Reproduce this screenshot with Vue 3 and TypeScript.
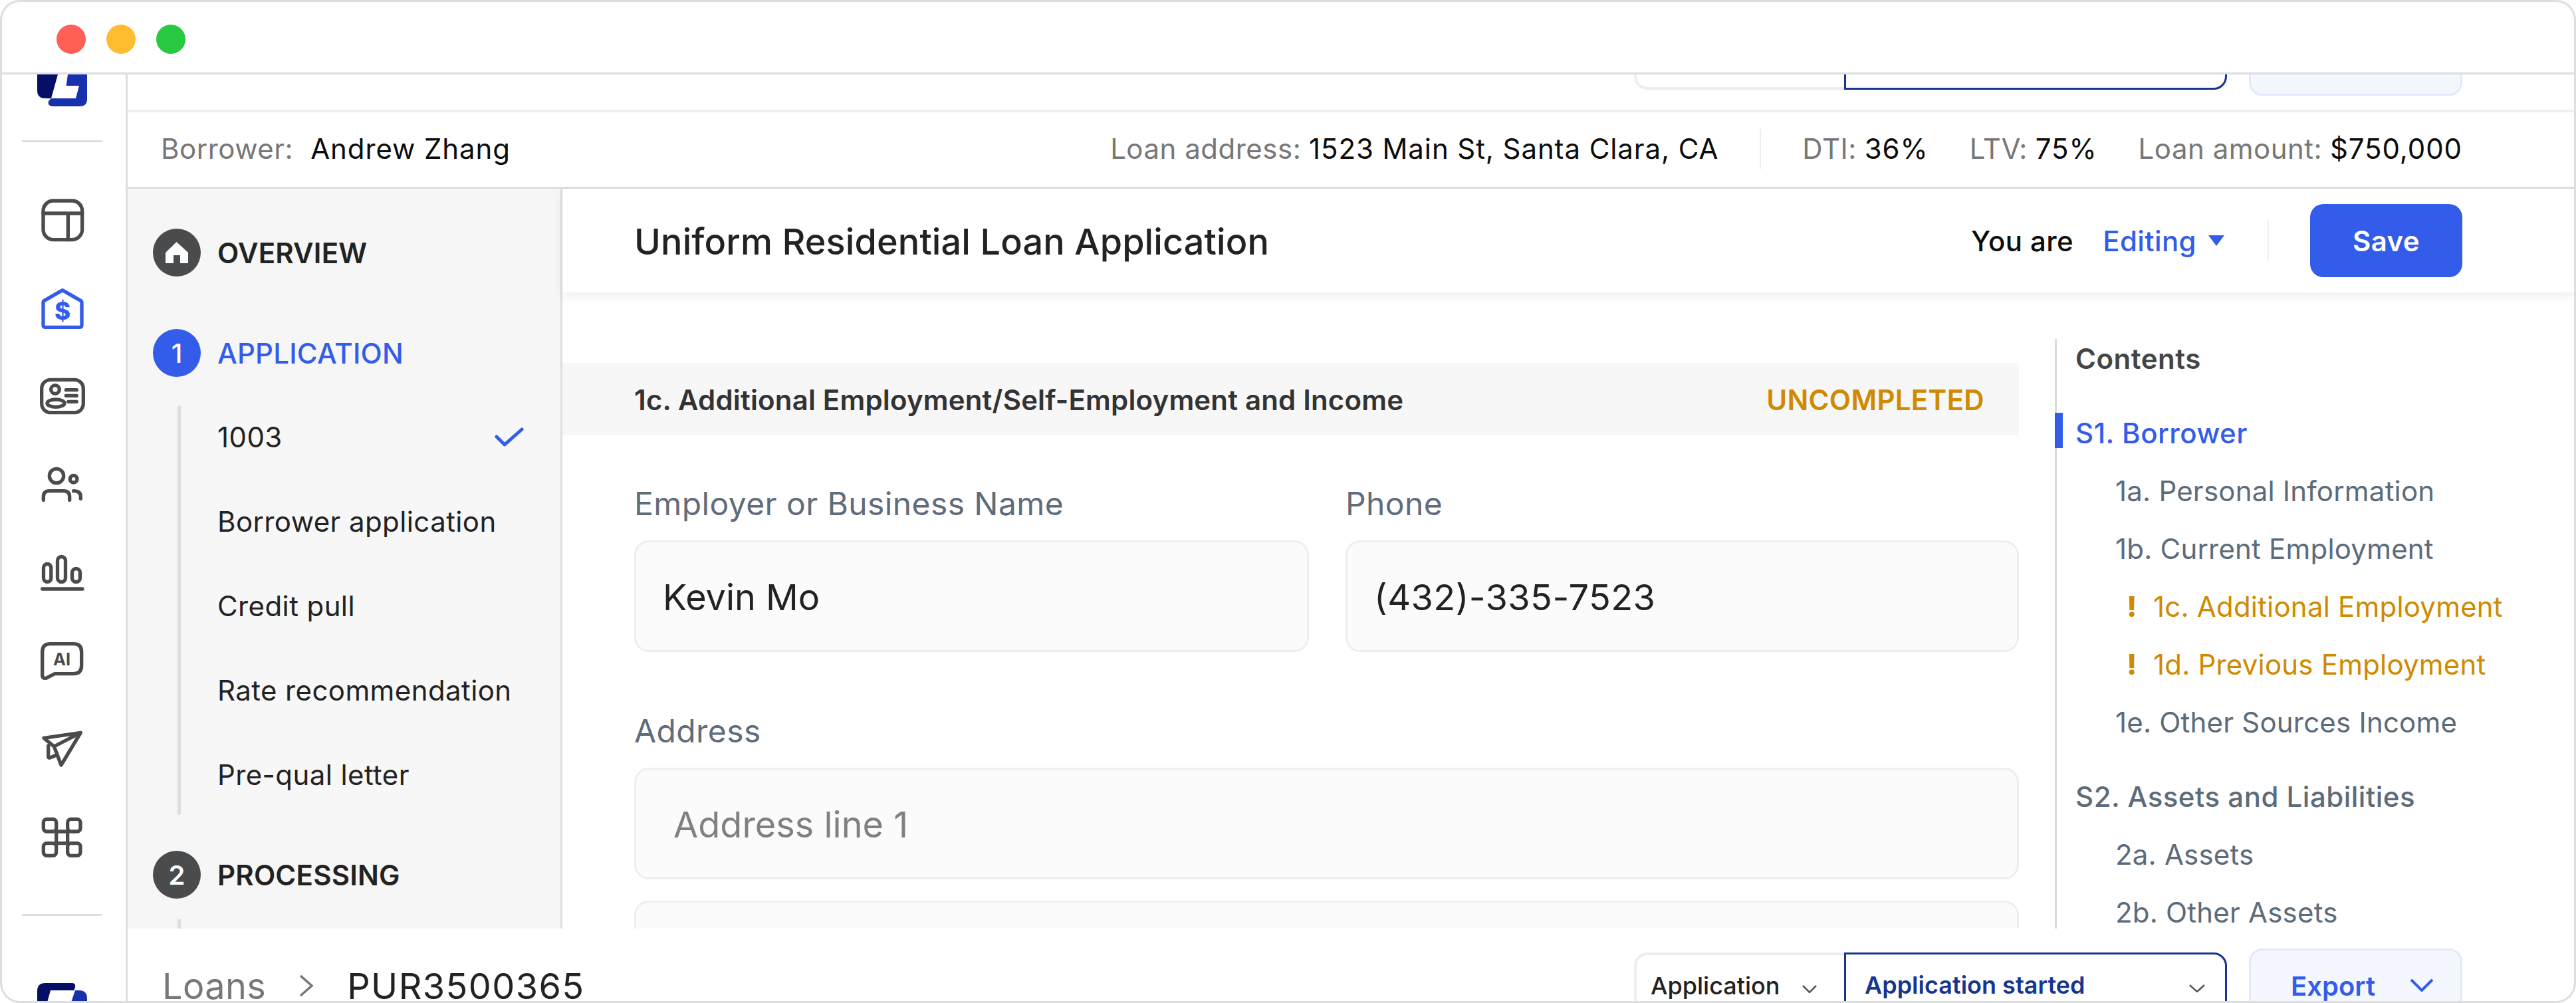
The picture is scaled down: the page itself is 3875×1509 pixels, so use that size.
<template>
  <div class="window">
    <div class="titlebar">
      <span class="dot red"></span>
      <span class="dot yellow"></span>
      <span class="dot green"></span>
    </div>

    <div class="body">
      <aside class="rail">
        <svg class="logo-top" viewBox="0 0 75 49" width="75" height="49">
          <path d="M0 0H31L21 36H12Q0 36 0 24Z" fill="#060f66" />
          <path d="M46 0H75V37Q75 48 64 48H24Q15 48 17 40L21 36H58L63 17H43.6Z" fill="#1731ae" />
        </svg>
        <div class="rail-sep first"></div>
        <div class="rail-icons">
          <svg viewBox="0 0 24 24" class="rail-icon">
            <rect x="3.3" y="3.3" width="17.6" height="17.6" rx="4.6" />
            <path d="M3.3 9H20.9M14.5 9V20.9" />
          </svg>
          <svg viewBox="0 0 24 24" class="rail-icon active">
            <path d="M12 3.8 20.4 8.6Q20.7 8.8 20.7 9.2V19.6Q20.7 20.5 19.8 20.5H4.2Q3.3 20.5 3.3 19.6V9.2Q3.3 8.8 3.6 8.6Z" />
            <text x="12" y="17" text-anchor="middle" class="icon-text">$</text>
          </svg>
          <svg viewBox="0 0 24 24" class="rail-icon">
            <rect x="2.6" y="4.6" width="18.8" height="14.8" rx="4" />
            <circle cx="8.7" cy="9" r="1.9" />
            <ellipse cx="9" cy="15.2" rx="3.9" ry="1.7" />
            <path d="M13.6 9.2H18.4M13.6 11.8H18.4M14.6 14.5H18.4" />
          </svg>
          <svg viewBox="0 0 24 24" class="rail-icon">
            <circle cx="9.3" cy="8.1" r="3.2" />
            <circle cx="17" cy="9.5" r="1.6" />
            <path d="M3.4 19V17.6Q3.4 14.9 6 14.9H12.6Q15.2 14.9 15.2 17.6V19M17 14.9Q20.2 14.9 20.2 17.4V18.4" />
          </svg>
          <svg viewBox="0 0 24 24" class="rail-icon">
            <rect x="3.45" y="7.95" width="3.4" height="8.1" rx="1.7" />
            <rect x="9.75" y="4.65" width="3.6" height="11.4" rx="1.8" />
            <rect x="16.35" y="10.05" width="3.6" height="6" rx="1.8" />
            <path d="M2.9 19.2H21" />
          </svg>
          <svg viewBox="0 0 24 24" class="rail-icon">
            <path d="M6.5 4.4H17Q20.6 4.4 20.6 8V14.2Q20.6 17.9 17 17.9H8.5L5 19.7Q2.9 20.5 2.9 18.5V8Q2.9 4.4 6.5 4.4Z" />
            <text x="11.7" y="14" text-anchor="middle" class="icon-text small">AI</text>
          </svg>
          <svg viewBox="0 0 24 24" class="rail-icon">
            <path d="M20.2 4.6 3.6 7 8.2 10.8 20.2 4.6 11.4 19.2 8.2 10.8M5.6 10.5V15.4Q5.6 16.1 6.4 15.9L9.3 14.7" />
          </svg>
          <svg viewBox="0 0 24 24" class="rail-icon">
            <rect x="3.4" y="3.7" width="5.8" height="5.6" rx="1.5" />
            <rect x="14.3" y="3.7" width="5.8" height="5.6" rx="1.5" />
            <rect x="3.4" y="14.6" width="5.8" height="5.6" rx="1.5" />
            <rect x="14.3" y="14.6" width="5.8" height="5.6" rx="1.5" />
            <path d="M9.2 9.3H14.3M9.2 14.6H14.3M9.2 9.3V14.6M14.3 9.3V14.6" />
          </svg>
        </div>
        <div class="rail-sep last"></div>
        <svg class="logo-bottom" viewBox="0 0 75 29" width="75" height="29">
          <path d="M12 0H52Q58 0 57 6L55.5 11H20L15 29H0V12Q0 0 12 0Z" fill="#060f66" />
          <path d="M57 11H63Q75 11 75 23V29H51Z" fill="#1731ae" />
        </svg>
      </aside>

      <div class="main">
        <div class="top-strip">
          <div class="selects">
            <div class="select plain"></div>
            <div class="select current"></div>
          </div>
          <div class="export"></div>
        </div>

        <div class="info-bar">
          <div class="borrower">
            <span class="muted">Borrower:</span>
            <span class="strong">Andrew Zhang</span>
          </div>
          <div class="facts">
            <span class="fact"><span class="muted">Loan address:</span> <span class="strong">1523 Main St, Santa Clara, CA</span></span>
            <span class="fact-sep"></span>
            <span class="fact"><span class="muted">DTI:</span> <span class="strong">36%</span></span>
            <span class="fact"><span class="muted">LTV:</span> <span class="strong">75%</span></span>
            <span class="fact"><span class="muted">Loan amount:</span> <span class="strong">$750,000</span></span>
          </div>
        </div>

        <div class="content">
          <nav class="steps">
            <div class="step first">
              <span class="step-badge">
                <svg viewBox="0 0 36 32" width="36" height="32"><path d="M17.5 0 35 16V32H23V20H13V32H1V16Z" fill="#fff" /></svg>
              </span>
              <span class="step-name">OVERVIEW</span>
            </div>
            <div class="step active">
              <span class="step-badge">1</span>
              <span class="step-name">APPLICATION</span>
            </div>
            <div class="sub-list">
              <div v-for="item in stepItems" :key="item.name" class="sub-item">
                <span>{{ item.name }}</span>
                <svg v-if="item.done" viewBox="0 0 44 30" width="44" height="30" class="check">
                  <path d="M3 14 15 26 41 3" />
                </svg>
              </div>
            </div>
            <div class="step">
              <span class="step-badge">2</span>
              <span class="step-name">PROCESSING</span>
            </div>
            <div class="sub-stub"></div>
          </nav>

          <div class="page">
            <header class="page-head">
              <h1>Uniform Residential Loan Application</h1>
              <div class="page-actions">
                <span class="you-are">You are</span>
                <span class="mode">Editing</span>
                <svg viewBox="0 0 24 16" width="24" height="16" class="caret"><path d="M0 0H24L12 16Z" /></svg>
                <span class="action-sep"></span>
                <button class="save">Save</button>
              </div>
            </header>

            <div class="page-body">
              <section class="form">
                <div class="section-bar">
                  <span class="section-title">1c. Additional Employment/Self-Employment and Income</span>
                  <span class="section-status">UNCOMPLETED</span>
                </div>
                <div class="two-col">
                  <div>
                    <div class="label">Employer or Business Name</div>
                    <div class="input">Kevin Mo</div>
                  </div>
                  <div>
                    <div class="label">Phone</div>
                    <div class="input digits">(432)-335-7523</div>
                  </div>
                </div>
                <div class="address">
                  <div class="label">Address</div>
                  <div class="input placeholder">Address line 1</div>
                  <div class="input blank"></div>
                </div>
              </section>

              <aside class="contents">
                <div class="contents-title">Contents</div>
                <template v-for="group in contents" :key="group.title">
                  <div class="toc-group" :class="{ current: group.current }">{{ group.title }}</div>
                  <div v-for="row in group.rows" :key="row.text" class="toc-row" :class="{ warn: row.warn }">
                    <span v-if="row.warn" class="toc-mark">!</span>{{ row.text }}
                  </div>
                </template>
              </aside>
            </div>
          </div>
        </div>

        <footer class="footer">
          <div class="crumbs">
            <span class="crumb-root">Loans</span>
            <svg viewBox="0 0 22 34" width="22" height="34" class="crumb-arrow"><path d="M2 2 19 17 2 32" /></svg>
            <span class="crumb-id">PUR3500365</span>
          </div>
          <div class="footer-actions">
            <div class="selects">
              <div class="select plain">
                <span>Application</span>
                <svg viewBox="0 0 22 12" width="22" height="12" class="chev"><path d="M1 1 11 11 21 1" /></svg>
              </div>
              <div class="select current">
                <span>Application started</span>
                <svg viewBox="0 0 24 12" width="24" height="12" class="chev"><path d="M1 1 12 11 23 1" /></svg>
              </div>
            </div>
            <div class="export">
              <span>Export</span>
              <svg viewBox="0 0 36 20" width="36" height="20" class="chev blue"><path d="M2 2 18 18 34 2" /></svg>
            </div>
          </div>
        </footer>
      </div>
    </div>
  </div>
</template>

<script setup lang="ts">
interface StepItem {
  name: string
  done?: boolean
}

interface TocRow {
  text: string
  warn?: boolean
}

interface TocGroup {
  title: string
  current?: boolean
  rows: TocRow[]
}

const stepItems: StepItem[] = [
  { name: '1003', done: true },
  { name: 'Borrower application' },
  { name: 'Credit pull' },
  { name: 'Rate recommendation' },
  { name: 'Pre-qual letter' },
]

const contents: TocGroup[] = [
  {
    title: 'S1. Borrower',
    current: true,
    rows: [
      { text: '1a. Personal Information' },
      { text: '1b. Current Employment' },
      { text: '1c. Additional Employment', warn: true },
      { text: '1d. Previous Employment', warn: true },
      { text: '1e. Other Sources Income' },
    ],
  },
  {
    title: 'S2. Assets and Liabilities',
    rows: [{ text: '2a. Assets' }, { text: '2b. Other Assets' }],
  },
]
</script>

<style>
html,
body {
  margin: 0;
  background: #fff;
}
</style>

<style scoped>
.window {
  box-sizing: border-box;
  width: 3875px;
  height: 1509px;
  display: flex;
  flex-direction: column;
  border: 3px solid #dddee0;
  border-radius: 30px;
  overflow: hidden;
  background: #fff;
  font-family: Inter, 'Liberation Sans', sans-serif;
  font-size: 42px;
  color: #222;
}

.titlebar {
  flex: none;
  box-sizing: border-box;
  height: 109px;
  padding: 6px 0 0 82px;
  display: flex;
  align-items: center;
  gap: 31px;
  border-bottom: 3px solid #dddee0;
}

.dot {
  width: 44px;
  height: 44px;
  border-radius: 50%;
}
.red { background: #ff5f57; }
.yellow { background: #febc2e; }
.green { background: #28c840; }

.body {
  flex: 1;
  min-height: 0;
  display: flex;
}

/* left rail */
.rail {
  flex: none;
  box-sizing: border-box;
  width: 189px;
  padding-right: 5px;
  display: flex;
  flex-direction: column;
  align-items: center;
  overflow: hidden;
  border-right: 3px solid #dddee0;
}

.logo-top,
.logo-bottom {
  flex: none;
  display: block;
}

.rail-sep {
  flex: none;
  width: 121px;
  height: 3px;
  background: #dddee0;
}
.rail-sep.first { margin-top: 50px; }
.rail-sep.last { margin-top: 75px; margin-bottom: 101px; }

.rail-icons {
  margin-top: 77px;
  display: flex;
  flex-direction: column;
  gap: 52.7px;
}

.rail-icon {
  display: block;
  width: 80px;
  height: 80px;
  fill: none;
  stroke: #4a4b4d;
  stroke-width: 1.6;
  stroke-linecap: round;
  stroke-linejoin: round;
}
.rail-icon.active { stroke: #335ceb; }

.icon-text {
  font-size: 11px;
  font-weight: 800;
  fill: #335ceb;
  stroke: none;
}
.icon-text.small {
  font-size: 7.6px;
  font-weight: 700;
  fill: #4a4b4d;
}

.main {
  flex: 1;
  min-width: 0;
  display: flex;
  flex-direction: column;
}

/* clipped toolbar at the top of the scroll area */
.top-strip {
  flex: none;
  box-sizing: border-box;
  height: 57px;
  padding-right: 168px;
  display: flex;
  justify-content: flex-end;
  gap: 33px;
  border-bottom: 4px solid #eeeeef;
  overflow: hidden;
}
.top-strip .selects {
  margin-top: -80px;
}
.top-strip .export {
  margin-top: -80px;
  height: 112px;
}

.selects {
  display: flex;
  height: 103px;
}

.select {
  box-sizing: border-box;
  height: 103px;
  display: flex;
  justify-content: space-between;
  padding-top: 26px;
  font-size: 36px;
  line-height: 40px;
}
.select.plain {
  width: 316px;
  padding-left: 21px;
  padding-right: 41px;
  border: 4px solid #eeeeee;
  border-right: 0;
  border-radius: 20px 0 0 20px;
  font-weight: 500;
}
.select.current {
  width: 576px;
  padding-left: 28px;
  padding-right: 30px;
  border: 3px solid #17348f;
  border-radius: 0 20px 20px 0;
  color: #17348f;
  font-weight: 600;
}

.chev {
  flex: none;
  margin-top: 19px;
  fill: none;
  stroke: #555;
  stroke-width: 2.5;
}
.chev.blue {
  stroke: #335ceb;
  stroke-width: 4;
  margin-top: 12px;
}

.export {
  box-sizing: border-box;
  width: 321px;
  height: 112px;
  display: flex;
  justify-content: space-between;
  padding: 30px 40px 0 60px;
  background: #f5f7fe;
  border: 3px solid #e3e9fc;
  border-radius: 20px;
  color: #335ceb;
  font-weight: 600;
  font-size: 40px;
  line-height: 48px;
}

/* borrower info */
.info-bar {
  flex: none;
  box-sizing: border-box;
  height: 115px;
  padding: 0 168px 3px 50px;
  display: flex;
  align-items: center;
  justify-content: space-between;
  border-bottom: 3px solid #dddee0;
}

.borrower {
  display: flex;
  gap: 26px;
}
.muted {
  color: #777;
  letter-spacing: 0.5px;
}
.strong {
  color: #0c0c0c;
  letter-spacing: 0.9px;
}

.facts {
  display: flex;
  align-items: center;
  gap: 62px;
}
.fact-sep {
  width: 2px;
  height: 60px;
  background: #eeeeef;
}

.content {
  flex: 1;
  min-height: 0;
  display: flex;
}

/* steps */
.steps {
  flex: none;
  box-sizing: border-box;
  width: 654px;
  padding: 60px 10px 0 38px;
  background: #f6f6f6;
  border-right: 3px solid #dddee0;
  overflow: hidden;
}

.step {
  display: flex;
  align-items: center;
  gap: 25px;
  height: 72px;
}
.step.active {
  margin-top: 79px;
  color: #335ceb;
}

.step-badge {
  flex: none;
  width: 72px;
  height: 72px;
  border-radius: 50%;
  display: flex;
  align-items: center;
  justify-content: center;
  background: #4a4b4d;
  color: #fff;
  font-size: 40px;
  font-weight: 600;
}
.step.active .step-badge {
  background: #335ceb;
  font-weight: 500;
}

.step-name {
  font-weight: 600;
  letter-spacing: 0.2px;
}
.step.active .step-name {
  font-weight: 500;
}

.sub-list {
  position: relative;
  margin: 29px 0 53px;
  padding-left: 70px;
  display: flex;
  flex-direction: column;
  gap: 4px;
  letter-spacing: 0.4px;
}
.sub-list::before {
  content: '';
  position: absolute;
  left: 37px;
  top: 14px;
  bottom: 1px;
  width: 5px;
  border-radius: 3px;
  background: #dddee0;
}

.sub-item {
  height: 123px;
  display: flex;
  align-items: center;
  justify-content: space-between;
  padding: 0 45px 0 27px;
  border-radius: 20px;
  background: #f7f7f7;
}

.check {
  fill: none;
  stroke: #335ceb;
  stroke-width: 5;
  stroke-linecap: round;
  stroke-linejoin: round;
}

.sub-stub {
  width: 5px;
  height: 40px;
  margin: 31px 0 0 37px;
  background: #dddee0;
}

/* page */
.page {
  flex: 1;
  min-width: 0;
  display: flex;
  flex-direction: column;
}

.page-head {
  flex: none;
  position: relative;
  box-sizing: border-box;
  height: 156px;
  padding: 0 168px 0 108px;
  display: flex;
  align-items: center;
  justify-content: space-between;
  box-shadow: 0 6px 14px rgba(30, 40, 70, 0.08);
}

h1 {
  margin: 3px 0 0;
  font-size: 54px;
  font-weight: 500;
  letter-spacing: 0.1px;
  color: #222;
}

.page-actions {
  display: flex;
  align-items: center;
  letter-spacing: 0.4px;
}
.you-are {
  color: #0c0c0c;
  font-weight: 500;
}
.mode {
  margin-left: 44px;
  color: #335ceb;
  font-weight: 500;
}
.caret {
  margin-left: 18px;
  fill: #335ceb;
}
.action-sep {
  width: 2px;
  height: 61px;
  margin: 0 62px 0 65px;
  background: #eeeeef;
}
.save {
  width: 229px;
  height: 110px;
  border: 0;
  border-radius: 20px;
  background: #335ceb;
  color: #fff;
  font: 600 42px Inter, 'Liberation Sans', sans-serif;
  letter-spacing: 0.4px;
}

.page-body {
  flex: 1;
  min-height: 0;
  display: flex;
  overflow: hidden;
}

.form {
  flex: none;
  width: 2191px;
  padding-top: 106px;
}

.section-bar {
  box-sizing: border-box;
  height: 109px;
  display: flex;
  align-items: center;
  justify-content: space-between;
  padding: 2px 52px 0 108px;
  background: #f7f7f7;
}
.section-title {
  font-weight: 600;
  letter-spacing: 0.16px;
  color: #333;
}
.section-status {
  font-weight: 600;
  letter-spacing: 0.3px;
  color: #cf8a00;
}

.two-col {
  display: grid;
  grid-template-columns: 1015px 1013px;
  gap: 55px;
  margin: 73px 0 0 108px;
}
.address {
  margin: 89px 0 0 108px;
}

.label {
  height: 60px;
  margin-bottom: 25px;
  font-size: 48px;
  line-height: 60px;
  letter-spacing: 0.4px;
  color: #5f6c7b;
}

.input {
  box-sizing: border-box;
  height: 168px;
  display: flex;
  align-items: center;
  padding: 2px 40px 0;
  background: #fbfbfb;
  border: 3px solid #eeeeee;
  border-radius: 22px;
  font-size: 54px;
  color: #222;
}
.input.digits {
  letter-spacing: 0.45px;
}
.input.placeholder {
  padding-left: 56px;
  color: #808080;
}
.input.blank {
  margin-top: 32px;
}

.contents {
  flex: none;
  margin: 70px 0 0 54px;
  padding-left: 28px;
  width: 738px;
  border-left: 3px solid #d7dbe0;
  color: #5c6b7a;
}

.contents-title {
  height: 60px;
  margin-bottom: 38px;
  line-height: 60px;
  font-weight: 600;
  letter-spacing: 0.5px;
  color: #444;
}

.toc-group {
  position: relative;
  height: 87px;
  line-height: 87px;
  font-weight: 500;
  letter-spacing: 0.5px;
}
.toc-row + .toc-group {
  margin-top: 25px;
}
.toc-group.current {
  color: #335ceb;
}
.toc-group.current::before {
  content: '';
  position: absolute;
  left: -31px;
  top: 13px;
  width: 12px;
  height: 53px;
  background: #335ceb;
}

.toc-row {
  height: 87px;
  line-height: 87px;
  padding-left: 60px;
  letter-spacing: 0.2px;
}
.toc-row.warn {
  color: #cf8a00;
}
.toc-mark {
  display: inline-block;
  width: 50px;
  margin-right: 7px;
  text-align: center;
  font-weight: 800;
}

/* bottom toolbar */
.footer {
  flex: none;
  height: 109px;
  padding: 30px 168px 0 52px;
  box-sizing: border-box;
  display: flex;
  justify-content: space-between;
  overflow: hidden;
}

.crumbs {
  display: flex;
  align-items: center;
  height: 112px;
  font-size: 54px;
}
.crumb-root {
  color: #777;
  letter-spacing: 0.4px;
}
.crumb-arrow {
  margin: 0 50px 0 50px;
  fill: none;
  stroke: #777;
  stroke-width: 3.5;
}
.crumb-id {
  color: #222;
  letter-spacing: 1.4px;
}

.footer-actions {
  display: flex;
  align-items: flex-start;
  gap: 33px;
}
.footer-actions .selects {
  margin-top: 6px;
}
</style>
